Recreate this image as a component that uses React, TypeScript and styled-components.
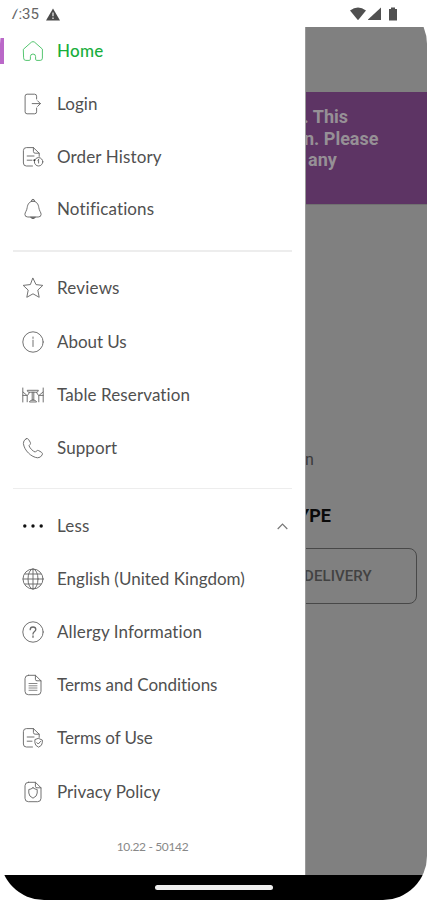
import React from "react";
import styled, { createGlobalStyle, css } from "styled-components";

const Global = createGlobalStyle`
  * { box-sizing: border-box; }
  body { margin: 0; background: #fff; }
`;

const Phone = styled.div`
  width: 427px;
  height: 900px;
  display: grid;
  grid-template-rows: 27px 848px 25px;
  border-radius: 44px;
  overflow: hidden;
  background: #fff;
  font-family: Lato, sans-serif;
`;

const StatusBar = styled.header`
  display: flex;
  align-items: center;
  padding: 1px 29px 0 10px;
  color: #666;
`;

const Clock = styled.span`
  font: 400 15px/20px Roboto, sans-serif;
  width: 36px;
`;

const StatusIcons = styled.div`
  display: flex;
  align-items: center;
  margin-left: auto;
`;

const Body = styled.div`
  display: grid;
  grid-template-columns: 305px 1fr;
  min-height: 0;
`;

const Drawer = styled.nav`
  display: flex;
  flex-direction: column;
  margin-top: -2.2px;
`;

const Group = styled.ul<{ $pitch: number }>`
  list-style: none;
  margin: 0;
  padding: 0;
  display: grid;
  grid-auto-rows: ${(p) => p.$pitch}px;
`;

const Row = styled.li<{ $active?: boolean }>`
  display: grid;
  grid-template-columns: 3.5px 19px 35px 1fr 28px;
  align-items: center;
  color: #505050;
  ${(p) =>
    p.$active &&
    css`
      color: #18ae3c;
      font-weight: 500;
    `}
`;

const Accent = styled.span<{ $on?: boolean }>`
  height: 26px;
  background: ${(p) => (p.$on ? "#ba68c8" : "transparent")};
`;

const IconBox = styled.span<{ $active?: boolean }>`
  grid-column: 3;
  display: flex;
  margin-left: -0.5px;
  color: ${(p) => (p.$active ? "#4cc268" : "#6a6a6a")};
`;

const Label = styled.span<{ $spacing?: number }>`
  font-size: 17px;
  line-height: 22px;
  white-space: nowrap;
  letter-spacing: ${(p) => p.$spacing ?? 0.2}px;
  margin-left: -0.5px;
`;

const Divider = styled.hr<{ $top: number; $bottom: number }>`
  width: 279px;
  height: 1.5px;
  border: 0;
  background: #ededed;
  margin: ${(p) => p.$top}px 0 ${(p) => p.$bottom}px 13px;
`;

const Version = styled.p`
  margin: 20.5px 0 0;
  text-align: center;
  font-size: 12px;
  line-height: 16px;
  letter-spacing: -0.35px;
  color: #888;
`;

const Page = styled.main`
  display: flex;
  flex-direction: column;
  overflow: hidden;
  background: #808080;
  border-left: 1px solid #999;
  font-family: Roboto, sans-serif;
  white-space: nowrap;
`;

const Banner = styled.section`
  margin-top: 65px;
  height: 113px;
  padding-top: 14px;
  background: #5d3464;
  border-bottom: 1px solid #707070;
  color: #969096;
  font-weight: 700;
  font-size: 18px;
  line-height: 21.5px;
`;

const BannerLine = styled.div<{ $shift: number }>`
  margin-left: ${(p) => p.$shift}px;
`;

const Caption = styled.p`
  margin: 244px 0 0 -1px;
  font-size: 16px;
  line-height: 22px;
  color: #3a3a3a;
`;

const TypeHeading = styled.h2`
  margin: 32px 0 0 -8px;
  font-size: 18px;
  line-height: 26px;
  font-weight: 700;
  color: #0a0a0a;
`;

const DeliveryButton = styled.button`
  margin: 19px 10px 0 -20px;
  height: 56px;
  padding: 0 0 0 17px;
  border: 1.3px solid #484848;
  border-radius: 8px;
  background: transparent;
  text-align: left;
  font: 500 15px/20px Roboto, sans-serif;
  letter-spacing: 0.1px;
  color: #424242;
`;

const NavBar = styled.footer`
  display: flex;
  justify-content: center;
  background: #000;
  padding-top: 10px;
`;

const HomePill = styled.span`
  width: 118px;
  height: 5px;
  border-radius: 3px;
  background: #eee;
`;

const paths: Record<string, React.ReactNode> = {
  home: (
    <path d="M1.6 9.1 9.4 2.2Q11 1 12.6 2.2L20.4 9.1V18.2Q20.4 20.4 18.2 20.4H14.8Q13.6 20.4 13.6 19.2V16.6Q13.6 14 11 14T8.4 16.6V19.2Q8.4 20.4 7.2 20.4H3.8Q1.6 20.4 1.6 18.2Z" />
  ),
  login: (
    <>
      <path d="M14.6 6V3.2Q14.6 1.2 12.6 1.2H5.1Q3.1 1.2 3.1 3.2V18.8Q3.1 20.8 5.1 20.8H12.6Q14.6 20.8 14.6 18.8V15" />
      <path d="M10.2 10.6H18.4M15.6 7.8 18.4 10.6 15.6 13.4" />
    </>
  ),
  history: (
    <>
      <path d="M10.5 20H4.4Q1.4 20 1.4 17V4.6Q1.4 1.6 4.4 1.6H11.4L17.2 7.2V10.4M11.4 1.6V5.4Q11.4 7.2 13.2 7.2H17.2M5.2 10H12M5.2 14.2H10" />
      <circle cx="16.6" cy="15.8" r="4.2" />
      <path d="M16.6 13.5V17M15.8 14.3 16.6 13.5" />
      <circle cx="12.4" cy="14.2" r="1" fill="#333" stroke="none" />
    </>
  ),
  bell: (
    <>
      <path d="M11 3.2C7.4 3.2 5.6 6.2 5.2 9.6C4.8 12.8 2.9 14.4 2.9 16.4Q2.9 19 5.8 19H16.2Q19.1 19 19.1 16.4C19.1 14.4 17.2 12.8 16.8 9.6C16.4 6.2 14.6 3.2 11 3.2ZM9.2 3.6Q9.5 1.2 11 1.2T12.8 3.6" />
      <path d="M8.8 19.6Q11 22.2 13.2 19.6Z" fill="#444" />
    </>
  ),
  star: (
    <path d="M11 1.3 14 7.6 20.8 8.4 15.8 13.1 17.2 20.3 11 16.8 4.8 20.3 6.2 13.1 1.2 8.4 8 7.6Z" />
  ),
  info: (
    <>
      <circle cx="11" cy="11" r="10.2" />
      <path d="M11 9.2V15.5M11 6V7.4" />
    </>
  ),
  table: (
    <>
      <path d="M.8 4V18M.8 11.4H5.2V17.8M21.2 4V18M21.2 11.4H16.8V17.8" />
      <path d="M5.6 6.3H16.4L15.4 8.2H6.6ZM10.2 8.2V16H11.8V8.2M7.5 17.6Q8 16 11 16T14.5 17.6Z" />
      <path d="M7.5 8.5 5.5 11.4M14.5 8.5 16.5 11.4M1 8 4.5 11M21 8 17.5 11" />
    </>
  ),
  phone: (
    <path d="M4.2 1.7Q1 3.5 1.4 6.5C2.2 13.5 9.4 20.3 15.7 20.8Q18.6 20.8 20.2 17.9Q21 16.4 19.5 15.3L16.7 13.6Q15.4 13 14.3 14.1L13.3 15.1C10.6 14.1 8 11.3 7 8.7L8 7.6Q9 6.5 8.2 5.2L6.5 2.4Q5.5 1 4.2 1.7Z" />
  ),
  dots: (
    <g fill="#111" stroke="none">
      <circle cx="2.8" cy="11" r="1.7" />
      <circle cx="11" cy="11" r="1.7" />
      <circle cx="19.2" cy="11" r="1.7" />
    </g>
  ),
  globe: (
    <>
      <circle cx="11" cy="11" r="10" />
      <ellipse cx="11" cy="11" rx="5" ry="10" />
      <path d="M11 1V21M1 11H21M3 6H19M3 16H19" />
    </>
  ),
  help: (
    <>
      <circle cx="11" cy="11" r="10.2" />
      <path d="M8.2 8.7Q8.2 6 11 6T13.8 8.4C13.8 10.5 11 10.5 11 13M11 14.8V16.3" strokeWidth="1.3" />
    </>
  ),
  terms: (
    <>
      <path d="M6.4 1.3H13.4L19 6.8V17.3Q19 20.7 15.6 20.7H6.4Q3 20.7 3 17.3V4.7Q3 1.3 6.4 1.3ZM13.4 1.3V5.3Q13.4 6.8 15 6.8H19" />
      <path d="M7 9.5H15M7 11.8H15M7 14H15M7 16.3H15" strokeWidth=".8" />
    </>
  ),
  use: (
    <>
      <path d="M10.5 20H4.4Q1.4 20 1.4 17V4.6Q1.4 1.6 4.4 1.6H11.4L17.2 7.2V10.4M11.4 1.6V5.4Q11.4 7.2 13.2 7.2H17.2M5.2 10H12M5.2 14.2H10" />
      <path d="M16.6 11.5 20.3 13V15.7Q20.3 18.6 16.6 20.2Q12.9 18.6 12.9 15.7V13ZM14.8 15.6 16.2 17 18.6 14.4" />
    </>
  ),
  privacy: (
    <>
      <path d="M6.4 1.3H13.4L19 6.8V17.3Q19 20.7 15.6 20.7H6.4Q3 20.7 3 17.3V4.7Q3 1.3 6.4 1.3ZM13.4 1.3V5.3Q13.4 6.8 15 6.8H19" />
      <path d="M11 6.8Q13 8.4 15.2 8.5V12Q15.2 15.3 11 17.2Q6.8 15.3 6.8 12V8.5Q9 8.4 11 6.8Z" />
    </>
  ),
};

const Icon = ({ name }: { name: string }) => (
  <svg width="22" height="22" viewBox="0 0 22 22" fill="none" stroke="currentColor" strokeWidth="0.95" strokeLinecap="round" strokeLinejoin="round">
    {paths[name]}
  </svg>
);

const Chevron = () => (
  <svg width="11" height="8" viewBox="0 0 11 8" fill="none" stroke="#777" strokeWidth="1.2">
    <path d="M.7 7 5.5 2.2 10.3 7" />
  </svg>
);

type Item = { icon: string; text: string; active?: boolean; open?: boolean; spacing?: number };

const main: Item[] = [
  { icon: "home", text: "Home", active: true, spacing: 0.3 },
  { icon: "login", text: "Login", spacing: 0.1 },
  { icon: "history", text: "Order History", spacing: 0.14 },
  { icon: "bell", text: "Notifications", spacing: 0.13 },
];
const service: Item[] = [
  { icon: "star", text: "Reviews" },
  { icon: "info", text: "About Us", spacing: -0.05 },
  { icon: "table", text: "Table Reservation", spacing: 0.11 },
  { icon: "phone", text: "Support", spacing: 0.1 },
];
const more: Item[] = [
  { icon: "dots", text: "Less", open: true },
  { icon: "globe", text: "English (United Kingdom)", spacing: 0.02 },
  { icon: "help", text: "Allergy Information", spacing: 0.1 },
  { icon: "terms", text: "Terms and Conditions", spacing: -0.04 },
  { icon: "use", text: "Terms of Use", spacing: -0.08 },
  { icon: "privacy", text: "Privacy Policy", spacing: 0.06 },
];

const Menu = ({ items, pitch }: { items: Item[]; pitch: number }) => (
  <Group $pitch={pitch}>
    {items.map((i) => (
      <Row key={i.text} $active={i.active}>
        <Accent $on={i.active} />
        <IconBox $active={i.active}>
          <Icon name={i.icon} />
        </IconBox>
        <Label $spacing={i.spacing}>{i.text}</Label>
        {i.open && <Chevron />}
      </Row>
    ))}
  </Group>
);

export default function App() {
  return (
    <>
      <Global />
      <Phone>
        <StatusBar>
          <Clock>7:35</Clock>
          <svg width="14" height="13" viewBox="0 0 14 13">
            <path d="M7 .5 14 12.5H0Z" fill="#4b4b4b" />
            <path d="M7 4.5V8.3M7 9.5V11" stroke="#ddd" strokeWidth="1.4" />
          </svg>
          <StatusIcons>
            <svg width="48" height="14" viewBox="0 0 48 14" fill="#505050">
              <path d="M0 3.6Q8 -2.6 16 3.6L8 13.2Z" />
              <path d="M18 13V12.5L31 .5V13Z" />
              <path d="M39 2H41V.4H45V2H47V13.5H39Z" />
            </svg>
          </StatusIcons>
        </StatusBar>
        <Body>
          <Drawer>
            <Menu items={main} pitch={52.7} />
            <Divider $top={14.6} $bottom={10.2} />
            <Menu items={service} pitch={53.3} />
            <Divider $top={12.7} $bottom={9.8} />
            <Menu items={more} pitch={53.2} />
            <Version>10.22 - 50142</Version>
          </Drawer>
          <Page>
            <Banner>
              <BannerLine $shift={-2.5}>. This</BannerLine>
              <BannerLine $shift={-2}>n. Please</BannerLine>
              <BannerLine $shift={2}>any</BannerLine>
            </Banner>
            <Caption>n</Caption>
            <TypeHeading>YPE</TypeHeading>
            <DeliveryButton>DELIVERY</DeliveryButton>
          </Page>
        </Body>
        <NavBar>
          <HomePill />
        </NavBar>
      </Phone>
    </>
  );
}
